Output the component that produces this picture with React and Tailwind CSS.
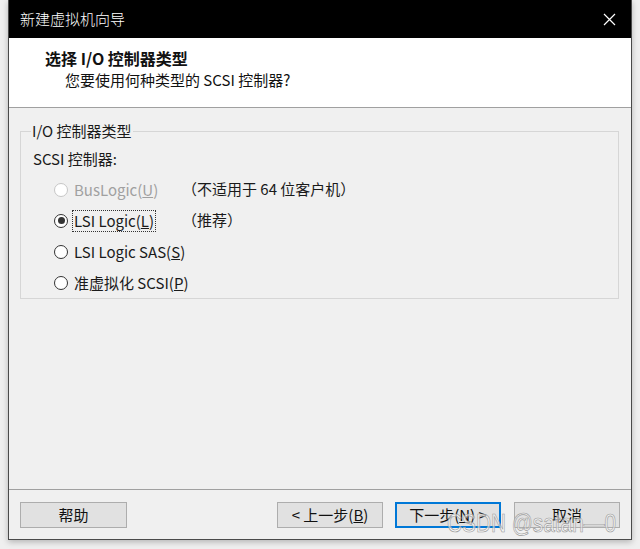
import React from "react";

const font = "font-['Noto_Sans_CJK_SC','Noto_Sans',sans-serif]";

const Radio = ({ checked, disabled }) => (
  <span
    className={
      "relative flex h-[14px] w-[14px] shrink-0 items-center justify-center rounded-full border bg-white " +
      (disabled ? "border-[#c6c6c6]" : "border-[#333333]")
    }
  >
    {checked && <span className="h-[7px] w-[7px] rounded-full bg-[#333333]" />}
  </span>
);

const Option = ({ label, hint, checked, disabled, focused }) => (
  <div className="flex h-[31px] items-center whitespace-nowrap">
    <div className="flex w-[128px] shrink-0 items-center gap-[4px]">
      <Radio checked={checked} disabled={disabled} />
      <span
        className={
          "leading-[20px] " +
          (disabled ? "text-[#a0a0a0] " : "text-[#1a1a1a] ") +
          (focused ? "border border-dotted border-[#333] px-[1px]" : "border border-transparent px-[1px]")
        }
      >
        {label}
      </span>
    </div>
    {hint && <span className="text-[#1a1a1a]">{hint}</span>}
  </div>
);

const Button = ({ children, primary, className = "" }) => (
  <button
    className={
      "flex h-[26px] items-center justify-center whitespace-nowrap bg-[#e1e1e1] text-[15px] text-[#111] " +
      (primary ? "border-2 border-[#0078d7] " : "border border-[#adadad] ") +
      className
    }
  >
    {children}
  </button>
);

export default function App() {
  return (
    <div className={"relative h-[549px] w-[640px] overflow-hidden bg-[#efefef] px-[8px] " + font}>
      <div className="flex h-[540px] w-[624px] flex-col border-x border-b border-[#4a4a4a] bg-[#f0f0f0] shadow-[0_2px_6px_rgba(0,0,0,0.25)]">
        <div className="flex h-[38px] shrink-0 items-center justify-between bg-black pl-[11px] pr-[14px] text-[15px] font-light text-white">
          <span>新建虚拟机向导</span>
          <svg width="13" height="13" viewBox="0 0 13 13" className="mr-[1px]">
            <path d="M1 1L12 12M12 1L1 12" stroke="#fff" strokeWidth="1.2" />
          </svg>
        </div>

        <div className="h-[70px] shrink-0 border-b border-[#a0a0a0] bg-white pl-[36px] pt-[10px] text-[#111]">
          <div className="text-[16px] font-bold leading-[20px]">选择 I/O 控制器类型</div>
          <div className="mt-[2px] pl-[20px] text-[15px] leading-[20px]">您要使用何种类型的 SCSI 控制器?</div>
        </div>

        <div className="flex-1 px-[11px] pt-[13px] text-[15px]">
          <fieldset className="w-[599px] border border-[#d6d6d6] pb-0 pl-[12px]">
            <legend className="-ml-[2px] px-[1px] leading-[20px] text-[#1a1a1a]">I/O 控制器类型</legend>
            <div className="mt-[8px] leading-[20px] text-[#1a1a1a]">SCSI 控制器:</div>
            <div className="mt-[5px] pl-[21px]">
              <Option
                disabled
                label={<>BusLogic(<u>U</u>)</>}
                hint="（不适用于 64 位客户机）"
              />
              <Option checked focused label={<>LSI Logic(<u>L</u>)</>} hint="（推荐）" />
              <Option label={<>LSI Logic SAS(<u>S</u>)</>} />
              <Option label={<>准虚拟化 SCSI(<u>P</u>)</>} />
            </div>
          </fieldset>
        </div>

        <div className="flex h-[50px] shrink-0 items-start border-t border-[#a0a0a0] pl-[11px] pr-[11px] pt-[12px]">
          <Button className="w-[107px]">帮助</Button>
          <div className="flex-1" />
          <Button className="w-[106px]">&lt; 上一步(<u>B</u>)</Button>
          <Button primary className="ml-[12px] w-[106px]">
            下一步(<u>N</u>) &gt;
          </Button>
          <Button className="ml-[13px] w-[106px]">取消</Button>
        </div>
      </div>

      <div className="pointer-events-none absolute left-[447px] top-[508px] origin-left scale-x-[0.8] whitespace-nowrap font-['Liberation_Sans',sans-serif] text-[26px] leading-[30px] text-white/60 [-webkit-text-stroke:0.7px_#9a9a9a]">
        CSDN @satan—0
      </div>
    </div>
  );
}
